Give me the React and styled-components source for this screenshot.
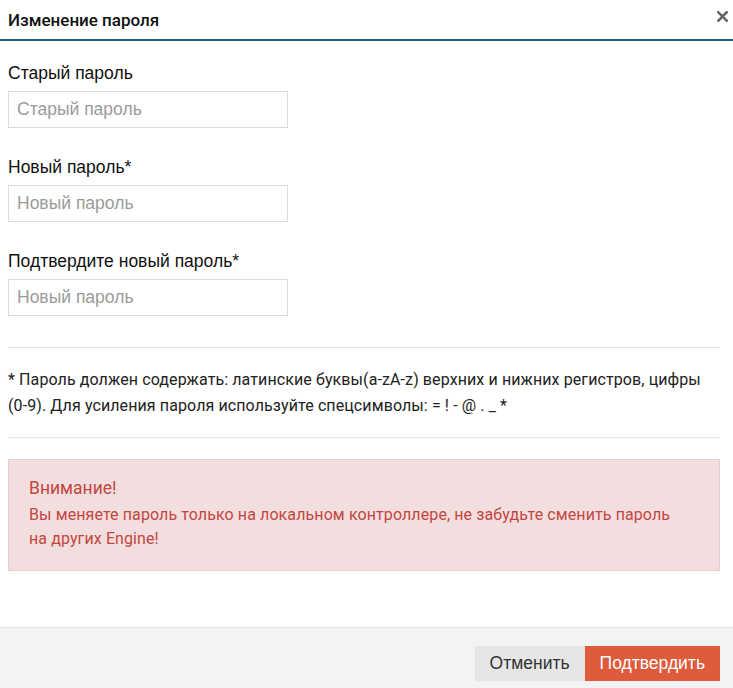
import React from "react";
import styled, { createGlobalStyle } from "styled-components";

const Global = createGlobalStyle`
  html, body { margin: 0; padding: 0; background: #fff; }
  body { font-family: "Liberation Sans", Arial, sans-serif; }
  * { box-sizing: border-box; }
`;

const Modal = styled.div`
  width: 733px;
  height: 688px;
  display: flex;
  flex-direction: column;
  background: #fff;
`;

const Header = styled.div`
  height: 41px;
  flex-shrink: 0;
  display: flex;
  align-items: center;
  justify-content: space-between;
  padding: 0 5px 0 8px;
  border-bottom: 2px solid #1f5f98;
`;

const Title = styled.h4`
  margin: 0;
  font-family: Roboto, sans-serif;
  font-weight: 500;
  font-size: 17px;
  line-height: 20px;
  color: #111;
`;

const Close = styled.button`
  align-self: flex-start;
  margin-top: 11px;
  border: 0;
  background: none;
  padding: 0;
  width: 11px;
  height: 11px;
  display: flex;
  cursor: pointer;
`;

const Body = styled.div`
  flex: 1;
  padding: 22px 13px 0 8px;
  display: flex;
  flex-direction: column;
`;

const Field = styled.div`
  display: flex;
  flex-direction: column;
  gap: 7px;
  margin-bottom: 29px;
`;

const Label = styled.label`
  font-size: 17.5px;
  line-height: 21px;
  color: #111;
`;

const Input = styled.input`
  width: 280px;
  height: 37px;
  border: 1px solid #dcdcdc;
  padding: 0 8px;
  font-family: "Liberation Sans", Arial, sans-serif;
  font-size: 17.5px;
  color: #333;
  outline: none;
  &::placeholder { color: #9b9b9b; }
`;

const Divider = styled.hr`
  margin: ${(p) => (p.$first ? "2px" : "0")} 0 0 0;
  border: 0;
  border-top: 1px solid #e3e3e3;
`;

const Hint = styled.p`
  margin: 19px 0 18px;
  font-family: Roboto, sans-serif;
  font-size: 16px;
  line-height: 26px;
  letter-spacing: 0.1px;
  color: #222;
`;

const Alert = styled.div`
  margin-top: 21px;
  background: #f2dede;
  border: 1px solid #ebccd1;
  padding: 16px 35px 19px 20px;
  color: #c4463f;
  font-family: Roboto, sans-serif;
`;

const AlertTitle = styled.div`
  font-size: 17.5px;
  line-height: 24px;
  margin-bottom: 3px;
`;

const AlertText = styled.div`
  font-size: 16px;
  line-height: 24px;
  letter-spacing: 0.1px;
`;

const Footer = styled.div`
  height: 61px;
  flex-shrink: 0;
  background: #f3f3f3;
  border-top: 1px solid #e2e2e2;
  display: flex;
  justify-content: flex-end;
  align-items: flex-start;
  padding: 18px 13px 0 0;
`;

const Button = styled.button`
  height: 35px;
  border: 0;
  padding: 0 15px;
  font-family: "Liberation Sans", Arial, sans-serif;
  font-size: 17.5px;
  background: ${(p) => (p.$primary ? "#de5b3b" : "#e6e6e6")};
  color: ${(p) => (p.$primary ? "#fff" : "#333")};
  cursor: pointer;
`;

export default function App() {
  return (
    <Modal>
      <Global />
      <Header>
        <Title>Изменение пароля</Title>
        <Close aria-label="Закрыть">
          <svg width="11" height="11" viewBox="0 0 11 11">
            <path d="M1.3 1.3 L9.7 9.7 M9.7 1.3 L1.3 9.7" stroke="#666" strokeWidth="2.6" strokeLinecap="square" />
          </svg>
        </Close>
      </Header>
      <Body>
        <Field>
          <Label>Старый пароль</Label>
          <Input type="password" placeholder="Старый пароль" />
        </Field>
        <Field>
          <Label>Новый пароль*</Label>
          <Input type="password" placeholder="Новый пароль" />
        </Field>
        <Field>
          <Label>Подтвердите новый пароль*</Label>
          <Input type="password" placeholder="Новый пароль" />
        </Field>
        <Divider $first />
        <Hint>
          * Пароль должен содержать: латинские буквы(a-zA-z) верхних и нижних регистров, цифры (0-9). Для усиления пароля используйте спецсимволы: = ! - @ . _ *
        </Hint>
        <Divider />
        <Alert>
          <AlertTitle>Внимание!</AlertTitle>
          <AlertText>
            Вы меняете пароль только на локальном контроллере, не забудьте сменить пароль на других Engine!
          </AlertText>
        </Alert>
      </Body>
      <Footer>
        <Button>Отменить</Button>
        <Button $primary>Подтвердить</Button>
      </Footer>
    </Modal>
  );
}
